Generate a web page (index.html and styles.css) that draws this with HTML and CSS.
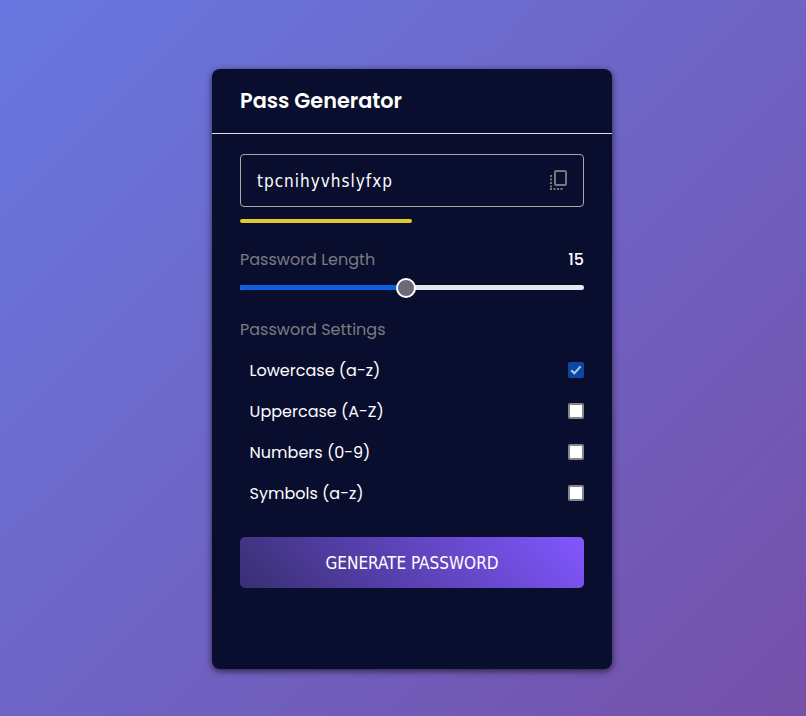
FILE: index.html
```html
<!DOCTYPE html>
<html lang="en">
<head>
<meta charset="utf-8">
<title>Pass Generator</title>
<link rel="stylesheet" href="styles.css">
</head>
<body>
<main class="container">
  <h1 class="title">Pass Generator</h1>
  <div class="wrapper">
    <div class="password-box">
      <span class="password">tpcnihyvhslyfxp</span>
      <svg class="copy" width="20" height="22" viewBox="0 0 20 22" fill="none" stroke="#77777b">
        <rect x="6" y="1" width="11" height="14" rx="1" stroke-width="2"/>
        <path d="M2 5v13M1 19h13" stroke-width="2" stroke-dasharray="2 1.5"/>
      </svg>
    </div>
    <div class="indicator"></div>
    <div class="row length"><span class="label">Password Length</span><span class="count">15</span></div>
    <div class="slider"><div class="fill"></div><div class="thumb"></div></div>
    <p class="label settings-label">Password Settings</p>
    <ul class="options">
      <li><span>Lowercase (a-z)</span><span class="check checked"><svg width="16" height="16" viewBox="0 0 16 16"><path d="M3.3 8.3l3 3 6.3-7" fill="none" stroke="#b9c8e4" stroke-width="2"/></svg></span></li>
      <li><span>Uppercase (A-Z)</span><span class="check"></span></li>
      <li><span>Numbers (0-9)</span><span class="check"></span></li>
      <li><span>Symbols (a-z)</span><span class="check"></span></li>
    </ul>
    <button class="generate">GENERATE PASSWORD</button>
  </div>
</main>
</body>
</html>
```
FILE: styles.css
```css
* { box-sizing: border-box; margin: 0; padding: 0; }
body {
  height: 716px;
  padding: 69px 0 0 212px;
  overflow: hidden;
  font: 16px/24px Poppins, Inter, sans-serif;
  color: #fff;
  background: linear-gradient(135deg, #6878e0, #7550a9);
}
.container {
  width: 400px;
  height: 600px;
  border-radius: 8px;
  background: #0a0e2e;
  box-shadow: 0 2px 7px rgba(0, 0, 0, .65);
}
.title {
  height: 65px;
  padding: 16px 28px;
  border-bottom: 1px solid #e0e0e8;
  font-size: 20.8px;
  line-height: 32px;
  font-weight: 600;
}
.wrapper { padding: 20px 28px; }
.password-box {
  display: flex;
  align-items: center;
  justify-content: space-between;
  height: 53px;
  padding: 0 14px 0 16px;
  border: 1px solid #aaa;
  border-radius: 4px;
}
.password {
  margin-top: 1px;
  font: 17px/24px "DejaVu Sans Condensed", "DejaVu Sans", sans-serif;
  letter-spacing: 1px;
}
.indicator {
  width: 172px;
  height: 4px;
  margin-top: 12px;
  border-radius: 3px;
  background: #e5c82c;
}
.row { display: flex; justify-content: space-between; }
.length { margin-top: 25px; }
.label { color: #7b7b80; }
.count { font-weight: 500; }
.slider {
  position: relative;
  height: 5px;
  margin-top: 13px;
  border-radius: 3px;
  background: #e6e6ee;
}
.fill {
  width: 166px;
  height: 5px;
  border-radius: 3px 0 0 3px;
  background: #0d61dd;
}
.thumb {
  position: absolute;
  left: 156px;
  top: -7px;
  width: 20px;
  height: 20px;
  border: 2px solid #fff;
  border-radius: 50%;
  background: #6b6a78;
}
.settings-label { margin-top: 28px; }
.options { list-style: none; margin-top: 15px; }
.options li {
  display: flex;
  align-items: center;
  justify-content: space-between;
  height: 26px;
  margin-bottom: 15px;
  padding-left: 9.6px;
}
.options li > span:first-child { padding-top: 1px; }
.check {
  width: 16px;
  height: 16px;
  border: 2px solid #85858d;
  border-radius: 2px;
  background: #fff;
}
.checked { border: 0; background: #0b47a3; }
.checked svg { display: block; }
.generate {
  display: block;
  width: 344px;
  height: 51px;
  margin-top: 31px;
  border: 0;
  border-radius: 5px;
  color: #fff;
  font: 17px/24px "DejaVu Sans Condensed", "DejaVu Sans", sans-serif;
  background: linear-gradient(45deg, #382f72, #8257ff);
}
```
